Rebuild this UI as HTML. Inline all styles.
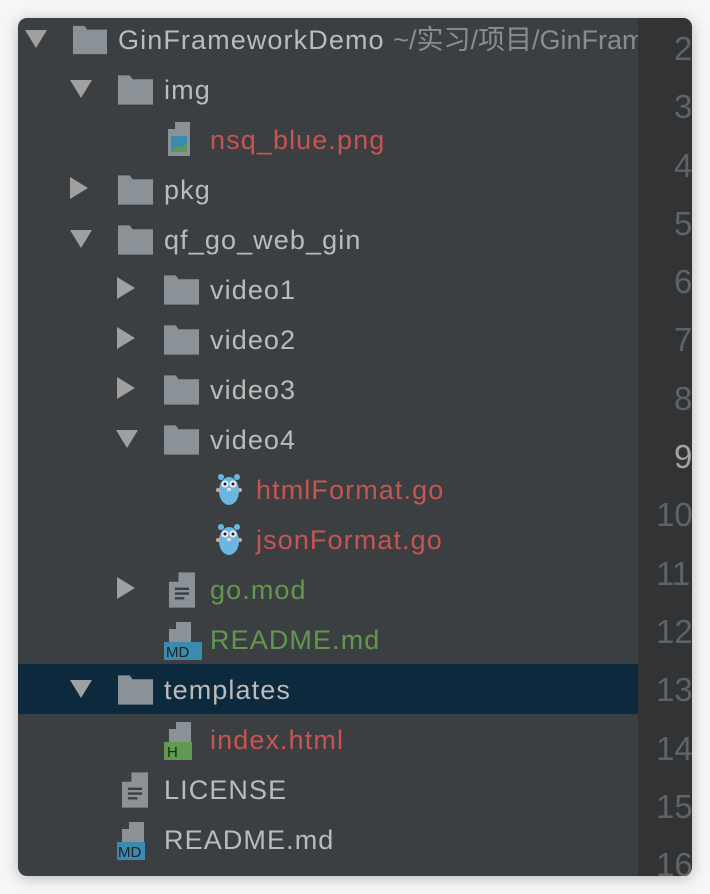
<!DOCTYPE html>
<html><head><meta charset="utf-8"><style>
body{margin:0;width:710px;height:894px;background:#f6f6f6;overflow:hidden;font-family:"Liberation Sans","Noto Sans CJK SC",sans-serif}
.win{position:absolute;left:18px;top:18px;width:674px;height:858px;background:#3c3f41;border-radius:9px;overflow:hidden;box-shadow:0 2px 14px rgba(0,0,0,.25)}
.gut{position:absolute;left:620px;top:0;width:54px;height:858px;background:#313335}
.row{position:absolute;left:0;width:620px;height:50px}
.sel{background:#0d293e}
.t{position:absolute;top:0;line-height:48px;font-size:27px;letter-spacing:1.1px;color:#bbbbbb;white-space:nowrap}
.r{color:#c75450}.g{color:#62974f}
</style></head><body>
<div class="win">
<div class="gut"></div>
<div class="row sel" style="top:646px"></div>
</div>
<svg width="0" height="0" style="position:absolute">
<defs>
<symbol id="dn" viewBox="0 0 22 18"><path d="M0 0H22L11 18Z" fill="#a0a0a0"/></symbol>
<symbol id="rt" viewBox="0 0 18 22"><path d="M0 0V22L18 11Z" fill="#a0a0a0"/></symbol>
<symbol id="fd" viewBox="0 0 36 30"><path d="M0 0H12L15 4H36V30H0Z" fill="#8a9197"/></symbol>
<symbol id="doc" viewBox="0 0 22 30"><path d="M8 0H22V30H0V8Z" fill="#8a9197"/><path d="M8 0V8H0Z" fill="#3c3f41"/><path d="M5 14H17M5 18H17M5 22H13" stroke="#3c3f41" stroke-width="2"/></symbol>
<symbol id="gopher" viewBox="0 0 26 34"><ellipse cx="13" cy="19" rx="10" ry="14" fill="#6ab7e3"/><circle cx="5" cy="5" r="3" fill="#6ab7e3"/><circle cx="21" cy="5" r="3" fill="#6ab7e3"/><circle cx="9" cy="12" r="3.5" fill="#eee"/><circle cx="17" cy="12" r="3.5" fill="#eee"/><circle cx="9" cy="12" r="1.5" fill="#222"/><circle cx="17" cy="12" r="1.5" fill="#222"/><rect x="11" y="16" width="4" height="3" fill="#ddd"/><circle cx="2" cy="18" r="2" fill="#d9a88a"/><circle cx="24" cy="18" r="2" fill="#d9a88a"/></symbol>
</defs></svg>

<div style="position:absolute;left:0;top:15px;width:638px;height:640px;overflow:hidden">
<svg style="position:absolute;left:25px;top:15px" width="22" height="18"><use href="#dn"/></svg>
<svg style="position:absolute;left:73px;top:10px" width="34" height="30"><use href="#fd"/></svg>
<div class="t" style="left:118px;top:1px">GinFrameworkDemo <span style="color:#8c8c8c;letter-spacing:0">~/实习/项目/GinFramework</span></div>
</div>

<div style="position:absolute;left:0;top:15px;width:692px">
<svg style="position:absolute;left:70px;top:65px" width="22" height="18"><use href="#dn"/></svg>
<svg style="position:absolute;left:118px;top:60px" width="35" height="30"><use href="#fd"/></svg>
<div class="t" style="left:164px;top:51px">img</div>

<svg style="position:absolute;left:168px;top:107px" width="22" height="34" viewBox="0 0 22 34"><path d="M7 0H22V34H0V7Z" fill="#8a9197"/><path d="M7 0V7H0Z" fill="#3c3f41"/><rect x="3" y="14" width="16" height="16" fill="#3a8bb0"/><path d="M3 30L8 24L12 26L19 22V30Z" fill="#5f9a50"/></svg>
<div class="t r" style="left:210px;top:101px">nsq_blue.png</div>

<svg style="position:absolute;left:70px;top:162px" width="18" height="22"><use href="#rt"/></svg>
<svg style="position:absolute;left:118px;top:160px" width="35" height="30"><use href="#fd"/></svg>
<div class="t" style="left:164px;top:151px">pkg</div>

<svg style="position:absolute;left:70px;top:215px" width="22" height="18"><use href="#dn"/></svg>
<svg style="position:absolute;left:118px;top:210px" width="35" height="30"><use href="#fd"/></svg>
<div class="t" style="left:164px;top:201px">qf_go_web_gin</div>

<svg style="position:absolute;left:117px;top:262px" width="18" height="22"><use href="#rt"/></svg>
<svg style="position:absolute;left:164px;top:260px" width="35" height="30"><use href="#fd"/></svg>
<div class="t" style="left:210px;top:251px">video1</div>

<svg style="position:absolute;left:117px;top:312px" width="18" height="22"><use href="#rt"/></svg>
<svg style="position:absolute;left:164px;top:310px" width="35" height="30"><use href="#fd"/></svg>
<div class="t" style="left:210px;top:301px">video2</div>

<svg style="position:absolute;left:117px;top:362px" width="18" height="22"><use href="#rt"/></svg>
<svg style="position:absolute;left:164px;top:360px" width="35" height="30"><use href="#fd"/></svg>
<div class="t" style="left:210px;top:351px">video3</div>

<svg style="position:absolute;left:116px;top:415px" width="22" height="18"><use href="#dn"/></svg>
<svg style="position:absolute;left:164px;top:410px" width="35" height="30"><use href="#fd"/></svg>
<div class="t" style="left:210px;top:401px">video4</div>

<svg style="position:absolute;left:216px;top:457px" width="26" height="34"><use href="#gopher"/></svg>
<div class="t r" style="left:256px;top:451px">htmlFormat.go</div>
<svg style="position:absolute;left:216px;top:507px" width="26" height="34"><use href="#gopher"/></svg>
<div class="t r" style="left:256px;top:501px">jsonFormat.go</div>

<svg style="position:absolute;left:117px;top:562px" width="18" height="22"><use href="#rt"/></svg>
<svg style="position:absolute;left:169px;top:557px" width="26" height="36" viewBox="0 0 22 30"><use href="#doc"/></svg>
<div class="t g" style="left:210px;top:551px">go.mod</div>

<svg style="position:absolute;left:164px;top:607px" width="38" height="38" viewBox="0 0 38 38"><path d="M12 0H27V24H5V7Z" fill="#8a9197"/><path d="M12 0V7H5Z" fill="#3c3f41"/><rect x="0" y="20" width="38" height="18" fill="#3a8bb0"/><text x="2" y="35" font-size="15" fill="#222" font-family="Liberation Sans">MD</text></svg>
<div class="t g" style="left:210px;top:601px">README.md</div>

<svg style="position:absolute;left:70px;top:665px" width="22" height="18"><use href="#dn"/></svg>
<svg style="position:absolute;left:118px;top:660px" width="35" height="30"><use href="#fd"/></svg>
<div class="t" style="left:164px;top:651px">templates</div>

<svg style="position:absolute;left:164px;top:707px" width="38" height="38" viewBox="0 0 38 38"><path d="M12 0H27V20H5V7Z" fill="#8a9197"/><path d="M12 0V7H5Z" fill="#3c3f41"/><rect x="0" y="20" width="28" height="18" fill="#5f9a50"/><text x="3" y="35" font-size="15" fill="#222" font-family="Liberation Sans">H</text></svg>
<div class="t r" style="left:210px;top:701px">index.html</div>

<svg style="position:absolute;left:122px;top:757px" width="26" height="36" viewBox="0 0 22 30"><use href="#doc"/></svg>
<div class="t" style="left:164px;top:751px">LICENSE</div>

<svg style="position:absolute;left:117px;top:807px" width="38" height="38" viewBox="0 0 38 38"><path d="M12 0H27V24H5V7Z" fill="#8a9197"/><path d="M12 0V7H5Z" fill="#3c3f41"/><rect x="0" y="20" width="28" height="18" fill="#3a8bb0"/><text x="1" y="35" font-size="15" fill="#222" font-family="Liberation Sans">MD</text></svg>
<div class="t" style="left:164px;top:801px">README.md</div>
</div>

<div style="position:absolute;left:656px;top:18px;width:36px;height:858px;overflow:hidden">
<div style="position:absolute;left:0;top:0;font-size:33px;color:#606366;line-height:58.3px;white-space:nowrap">
<div style="margin-left:18px;margin-top:2px">2</div><div style="margin-left:18px">3</div><div style="margin-left:18px">4</div><div style="margin-left:18px">5</div><div style="margin-left:18px">6</div><div style="margin-left:18px">7</div><div style="margin-left:18px">8</div><div style="margin-left:18px;color:#a4a3a3">9</div><div>10</div><div>11</div><div>12</div><div>13</div><div>14</div><div>15</div><div>16</div>
</div></div>
</body></html>
